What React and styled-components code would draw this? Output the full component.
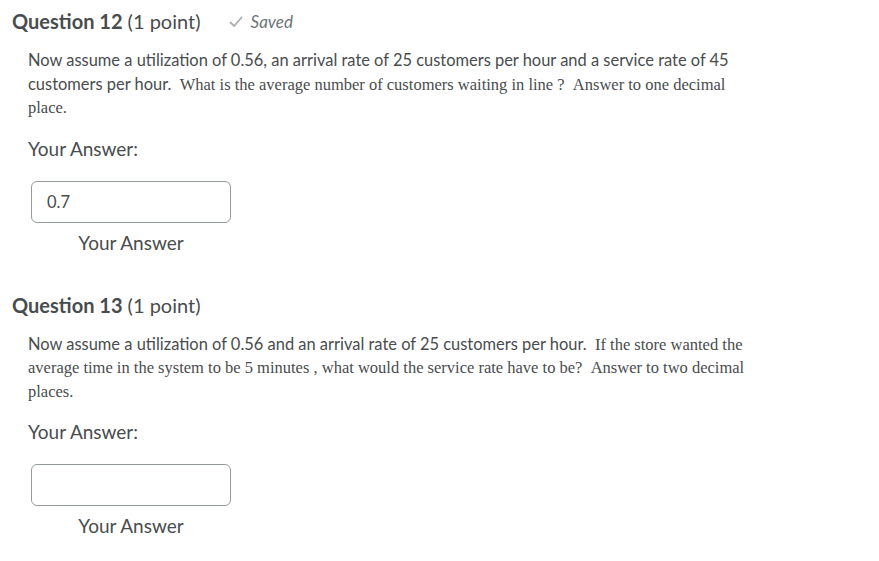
import styled, { createGlobalStyle } from "styled-components";

const GlobalStyle = createGlobalStyle`
  body {
    margin: 0;
    background: #ffffff;
    font-family: Lato, "Open Sans", sans-serif;
    color: #494c4e;
  }
`;

const Page = styled.div`
  padding: 8px 0 0 12px;
`;

const QuestionBlock = styled.section`
  margin-bottom: 36px;
`;

const Header = styled.div`
  display: flex;
  align-items: center;
  height: 27px;
`;

const Title = styled.h2`
  margin: 0;
  font-size: 20px;
  line-height: 27px;
  font-weight: 400;
  color: #494c4e;
  b {
    font-weight: 700;
  }
`;

const SavedTag = styled.span`
  display: flex;
  align-items: center;
  margin-left: 28px;
  font-size: 17px;
  font-style: italic;
  color: #6e7376;
  svg {
    margin-right: 8px;
  }
`;

const Body = styled.div`
  padding-left: 16px;
`;

const Prompt = styled.p`
  margin: 14px 0 0;
  width: 730px;
  font-size: 16.45px;
  line-height: 23.5px;
  color: #494c4e;
`;

const Serif = styled.span`
  font-family: "Liberation Serif", "Times New Roman", serif;
  font-size: 16.5px;
  line-height: 1;
`;

const AnswerLabel = styled.div`
  margin-top: 15px;
  font-size: 19px;
  line-height: 27px;
`;

const AnswerField = styled.div`
  display: flex;
  flex-direction: column;
  align-items: center;
  width: 200px;
  margin: 19px 0 0 3px;
`;

const Input = styled.input`
  box-sizing: border-box;
  width: 200px;
  height: 42px;
  padding: 0 15px;
  border: 1px solid #959a9d;
  border-radius: 6px;
  font-family: Lato, sans-serif;
  font-size: 16.5px;
  color: #494c4e;
  background: #fff;
  outline: none;
`;

const FieldCaption = styled.div`
  margin-top: 6px;
  font-size: 19px;
  line-height: 27px;
`;

const CheckIcon = () => (
  <svg width="14" height="12" viewBox="0 0 14 12">
    <polyline
      points="1.5,6.5 5.2,10 12.5,1.5"
      fill="none"
      stroke="#a8acaf"
      strokeWidth="1.8"
      strokeLinecap="round"
      strokeLinejoin="round"
    />
  </svg>
);

const Question = ({ number, saved, value, children }) => (
  <QuestionBlock>
    <Header>
      <Title>
        <b>Question {number}</b> (1 point)
      </Title>
      {saved && (
        <SavedTag>
          <CheckIcon />
          Saved
        </SavedTag>
      )}
    </Header>
    <Body>
      <Prompt>{children}</Prompt>
      <AnswerLabel>Your Answer:</AnswerLabel>
      <AnswerField>
        <Input type="text" defaultValue={value} aria-label="Your Answer" />
        <FieldCaption>Your Answer</FieldCaption>
      </AnswerField>
    </Body>
  </QuestionBlock>
);

export default function App() {
  return (
    <Page>
      <GlobalStyle />
      <Question number={12} saved value="0.7">
        Now assume a utilization of 0.56, an arrival rate of 25 customers per
        hour and a service rate of 45 customers per hour.{" "}
        <Serif>
          &nbsp;What is the average number of customers waiting in line ?
          &nbsp;Answer to one decimal place.
        </Serif>
      </Question>
      <Question number={13} value="">
        Now assume a utilization of 0.56 and an arrival rate of 25 customers
        per hour.{" "}
        <Serif>
          &nbsp;If the store wanted the average time in the system to be 5
          minutes , what would the service rate have to be? &nbsp;Answer to two
          decimal places.
        </Serif>
      </Question>
    </Page>
  );
}
